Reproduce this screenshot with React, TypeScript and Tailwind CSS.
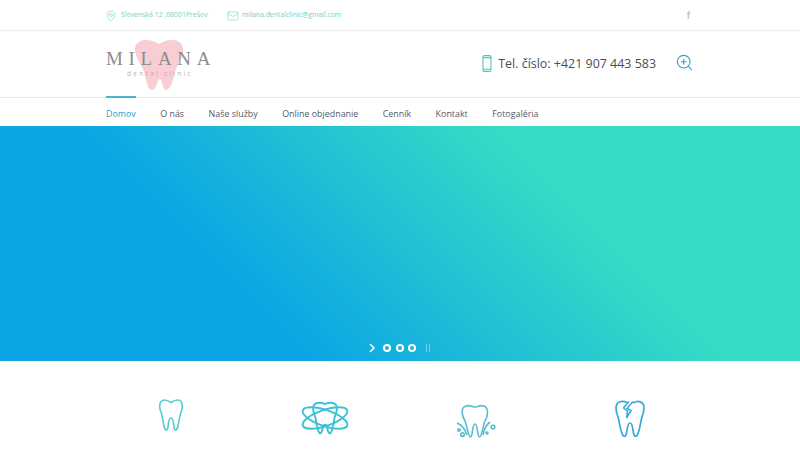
import { Mail, MapPin, ZoomIn } from "lucide-react";

const navItems = ["Domov", "O nás", "Naše služby", "Online objednanie", "Cenník", "Kontakt", "Fotogaléria"];

function PlainTooth() {
  return (
    <svg width="24" height="33" viewBox="0 0 24 33" fill="none" stroke="#55cbd0" strokeWidth="1.6">
      <path d="M12 3.500C9 1.500 4.500 0 2 2.500C0 5 0.500 10 2 13C3.500 17 4 23 5 27C6 32 8.500 32.500 9 28C9.500 24 9.500 19 12 19C14.500 19 14.500 24 15 28C15.500 32.500 18 32 19 27C20 23 20.500 17 22 13C23.500 10 24 5 22 2.500C19.500 0 15 1.500 12 3.500Z" />
    </svg>
  );
}

function AtomTooth() {
  return (
    <svg width="50" height="34" viewBox="0 0 50 34" fill="none" stroke="#3cc2d4" strokeWidth="1.9">
      <path d="M25 3C21 1 15 1 13.500 5C12 9 14.500 13 15.500 17C16.500 22 17 29 19.500 32C21.500 33.500 22.500 29 23 26C23.500 23 26.500 23 27 26C27.500 29 28.500 33.500 30.500 32C33 29 33.500 22 34.500 17C35.500 13 38 9 36.500 5C35 1 29 1 25 3Z" />
      <ellipse cx="25" cy="17" rx="23.500" ry="8" transform="rotate(19 25 17)" />
      <ellipse cx="25" cy="17" rx="23.500" ry="8" transform="rotate(-19 25 17)" />
    </svg>
  );
}

function GumTooth() {
  return (
    <svg width="40" height="36" viewBox="0 0 40 36" fill="none" stroke="#58bccf" strokeWidth="1.6">
      <path d="M9 17C6 12 4 4 10 2C14 0.500 17 3 19 3C21 3 25 0.500 28 2C33 4 32 12 29 17C27 21 26 33 23.500 33C21 33 22 20 19 20C16 20 17 33 14.500 33C12 33 11 21 9 17Z" />
      <path d="M1 19C6 21 9 25 11 31M34 18C30 21 28 26 27 31" />
      <circle cx="3" cy="26" r="1.300" />
      <circle cx="6.500" cy="30.500" r="1.800" />
      <circle cx="37" cy="23" r="1.800" />
      <circle cx="31" cy="29" r="1" />
    </svg>
  );
}

function CrackedTooth() {
  return (
    <svg width="30" height="38" viewBox="0 0 30 38" fill="none" stroke="#38a9d8" strokeWidth="1.7">
      <path d="M12 2.500C8 0.500 3 1 1.500 5C0 9 1.500 13 3 17C4.500 22 5 28 6.500 32C8 37.500 10.500 37.500 11.500 33C12.500 28 12.500 23 15 23C17.500 23 17.500 28 18.500 33C19.500 37.500 22 37.500 23.500 32C25 28 25.500 22 27 17C28.500 13 30 9 28.500 5C27 1 22 0.500 18 3" />
      <path d="M18 1.500L12 8.500L16 10.500L11.500 18M14 1.500L8.500 8L12.500 11L11.500 18" strokeWidth="1.500" />
    </svg>
  );
}

export default function App() {
  return (
    <div className="w-[800px] h-[450px] overflow-hidden bg-white font-['Open_Sans',sans-serif]">
      <div className="h-[31px] border-b border-[#eeeeee] pl-[106px] pr-[110px] flex items-center justify-between">
        <div className="flex items-center text-[6.900px] text-[#6dd2c9] pt-px">
          <MapPin size={12} strokeWidth={1.2} className="-ml-px mr-[4px]" />
          <span>Slovenská 12 ,08001Prešov</span>
          <Mail size={12} strokeWidth={1.2} className="ml-[19px] mr-[3.500px]" />
          <span>milana.dentalclinic@gmail.com</span>
        </div>
        <span className="text-[10px] font-bold text-[#c4c4c4] font-['Liberation_Sans',sans-serif]">f</span>
      </div>

      <div className="h-[66px] pl-[106px] pr-[106px] flex items-center justify-between">
        <div className="relative w-[110px] h-[52px]">
          <svg width="52" height="54" viewBox="0 0 52 54" className="absolute left-[27px] top-[0px]">
            <path
              fill="#f8ced4"
              d="M26 6C32 2 44 -1 49 7C53 15 46 24 43 31C41 38 38 52 33 52C29 52 30 42 27 41C24 41 24 52 19 52C14 52 13 38 10 31C7 24 -1 15 3 7C8 -1 20 2 26 6Z"
            />
          </svg>
          <div className="absolute left-0 top-[9px] font-['Liberation_Serif',serif] text-[19px] leading-6 tracking-[5.700px] text-[#8c8c8c] whitespace-nowrap">
            MILANA
          </div>
          <div className="absolute left-[21px] top-[31px] text-[6.500px] leading-[9px] tracking-[2.300px] text-[#c0aeb2] whitespace-nowrap">
            dental clinic
          </div>
        </div>
        <div className="flex items-center">
          <svg width="10" height="17" viewBox="0 0 10 17" fill="none" stroke="#45cdbd" strokeWidth="1.100" className="-mt-px">
            <rect x="1" y="0.600" width="8" height="15.800" rx="1.400" />
            <path d="M1 2.600H9M1 14.200H9" />
          </svg>
          <span className="text-[12.450px] text-[#4a4f55] ml-[6px]">Tel. číslo: +421 907 443 583</span>
          <ZoomIn size={19} strokeWidth={1.4} className="text-[#2ea5c6] ml-[19px] -mt-[3px]" />
        </div>
      </div>

      <nav className="h-[29px] border-t border-[#e8e8e8] pl-[106px] flex items-stretch gap-[24.500px] text-[8.900px] text-[#555a60]">
        {navItems.map((item, i) => (
          <span key={item} className={`relative flex items-center pt-[3px] ${i === 0 ? "text-[#2e9fc7]" : ""}`}>
            {i === 0 && <span className="absolute left-0 right-0 -top-[2px] h-[2px] bg-[#4cb3d0]" />}
            {item}
          </span>
        ))}
      </nav>

      <div className="relative h-[235px] bg-[linear-gradient(45deg,#0ca6e4_0%,#0ca6e4_31%,#38dcc4_71%,#38dcc4_100%)]">
        <div className="absolute left-[369px] bottom-[8px] flex items-center h-[10px]">
          <svg width="6" height="10" viewBox="0 0 6 10" fill="none" stroke="#ffffff" strokeWidth="1.500">
            <path d="M1 1L5 5L1 9" />
          </svg>
          <span className="w-[8px] h-[8px] rounded-full border-2 border-white ml-[8px]" />
          <span className="w-[8px] h-[8px] rounded-full border-2 border-white ml-[5px]" />
          <span className="w-[8px] h-[8px] rounded-full border-2 border-white ml-[4px]" />
          <span className="w-[4px] h-[8px] border-x border-white/40 ml-[10px]" />
        </div>
      </div>

      <div className="flex pt-[37px] h-[89px] items-start">
        <div className="ml-[159px] mt-px"><PlainTooth /></div>
        <div className="ml-[117px] mt-[3px]"><AtomTooth /></div>
        <div className="ml-[106px] mt-[6px]"><GumTooth /></div>
        <div className="ml-[119px] mt-[2px]"><CrackedTooth /></div>
      </div>
    </div>
  );
}
